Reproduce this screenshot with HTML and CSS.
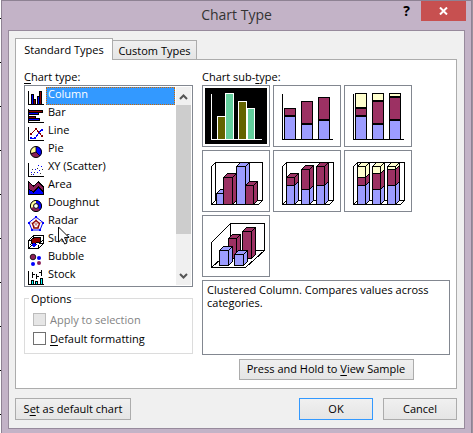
FILE: index.html
```html
<!DOCTYPE html>
<html lang="en">
<head>
<meta charset="utf-8">
<title>Chart Type</title>
<link rel="stylesheet" href="styles.css">
</head>
<body>
<main class="window">
  <header class="titlebar">
    <h1>Chart Type</h1>
    <div class="caption-buttons">
      <button class="help" type="button">?</button>
      <button class="close" type="button" aria-label="Close"><svg width="9" height="8" viewBox="0 0 9 8"><path d="M1 .5l7 7M8 .5l-7 7" stroke="#fff" stroke-width="2"/></svg></button>
    </div>
  </header>
  <div class="client">
    <div class="tabs" role="tablist">
      <button class="tab active" role="tab" aria-selected="true" type="button">Standard Types</button>
      <button class="tab" role="tab" aria-selected="false" type="button">Custom Types</button>
    </div>
    <section class="panel" role="tabpanel">
      <div class="left">
        <div class="label" id="type-label"><u>C</u>hart type:</div>
        <div class="listbox">
          <ul class="types" role="listbox" aria-labelledby="type-label">
            <li role="option" aria-selected="true" class="selected"><svg class="icon" viewBox="0 0 16 16"><g stroke="#000"><path d="M.5 2v13.500H16" fill="none"/><path fill="#00f" d="M3.500 5.500h2v10h-2zM9.500 7.500h2v8h-2z"/><path fill="#8b0000" d="M5.500 10.500h2v5h-2zM11.500 2.500h2v13h-2z"/></g></svg><span>Column</span></li>
            <li role="option"><svg class="icon" viewBox="0 0 16 16"><g stroke="#000"><path fill="#8b0000" d="M.5 3.500h14v2H.5zM.5 9.500h7v2H.5z"/><path fill="#00f" d="M.5 5.500h10v2H.5zM.5 11.500h11v2H.5z"/><path d="M.5 2v13.500H16" fill="none"/></g></svg><span>Bar</span></li>
            <li role="option"><svg class="icon" viewBox="0 0 16 16"><path d="M.5 2v13.500H16" fill="none" stroke="#000"/><path d="M3 9l5-5 6 7" fill="none" stroke="#8b0000"/><path d="M3 13h4l7-9" fill="none" stroke="#00f"/><path fill="#8b0000" d="M2 8h2v2H2zM7 3h2v2H7zM13 10h2v2h-2z"/><path fill="#00f" d="M2 12h2v2H2zM6 12h2v2H6zM13 4h2v2h-2z"/></svg><span>Line</span></li>
            <li role="option"><svg class="icon smooth" viewBox="0 0 16 16"><circle cx="8" cy="9" r="5.500" fill="#8a2058"/><path d="M8 9V3.500A5.500 5.500 0 0 0 2.500 10z" fill="#ffff9c"/><path d="M8 9V3.500A5.500 5.500 0 0 1 12 13z" fill="#00f"/><path d="M8 3.500V9l4 4M8 9l-5 2" stroke="#000" fill="none" stroke-width=".8"/><circle cx="8" cy="9" r="5.500" fill="none" stroke="#000"/></svg><span>Pie</span></li>
            <li role="option"><svg class="icon" viewBox="0 0 16 16"><path d="M.5 2v13.500H16" fill="none" stroke="#000"/><path fill="#00f" d="M3 11h1v1H3zM5 13h1v1H5zM7 8h1v1H7zM9 11h1v1H9zM11 9h1v1h-1zM13 5h1v1h-1zM10 4h1v1h-1z"/><path fill="#333" d="M4 8h1v1H4zM6 11h1v1H6zM9 7h1v1H9zM12 12h1v1h-1zM14 8h1v1h-1zM3 13h1v1H3z"/></svg><span>XY (Scatter)</span></li>
            <li role="option"><svg class="icon" viewBox="0 0 16 16"><path d="M.5 15.500V3l5 4 5-4 5 5v7.500z" fill="#8a2058" stroke="#000"/><path d="M.5 15.500V10l5 3 5-5 5 5v2.500z" fill="#00f" stroke="#000"/></svg><span>Area</span></li>
            <li role="option"><svg class="icon smooth" viewBox="0 0 16 16"><circle cx="8" cy="9" r="4" fill="none" stroke="#8a2058" stroke-width="3"/><path d="M8 5A4 4 0 0 0 4.200 10.500" fill="none" stroke="#ffff9c" stroke-width="3"/><path d="M8 5A4 4 0 0 1 11 11.700" fill="none" stroke="#00f" stroke-width="3"/><circle cx="8" cy="9" r="5.600" fill="none" stroke="#000"/><circle cx="8" cy="9" r="2.400" fill="#fff" stroke="#000"/></svg><span>Doughnut</span></li>
            <li role="option"><svg class="icon smooth" viewBox="0 0 16 16"><g fill="none"><path d="M8 2l7 5.500-3 7.500H4L1 7.500z" stroke="#00f"/><path d="M8 5.500l3.500 3-1.500 4.500H6L4.500 8.500z" stroke="#8b0000" stroke-width="1.300"/><path d="M8 2v7l7-2M8 9l4 6M8 9l-4 6M8 9L1 7.500" stroke="#8b0000" stroke-width=".4"/></g><path fill="#00f" d="M7 1h2v2H7zM0 7h2v2H0zM14 7h2v2h-2zM3 14h2v2H3zM11 14h2v2h-2z"/></svg><span>Radar</span></li>
            <li role="option"><svg class="icon" viewBox="0 0 16 16"><path d="M.5 7.500l5-5h10v8l-5 5H.5z" fill="#fff" stroke="#000"/><path d="M3 11l1-5 3-2 6 1-1 4-4 1z" fill="#8b0000" stroke="#000"/><path d="M2 13l3-3 4 1-2 3z" fill="#00f"/><path d="M.5 7.500h3M5.500 2.500v2M12 10.500h3.500M10.500 15.500v-4M.5 15.500l3-3M10.500 11.500l5-5" fill="none" stroke="#000"/></svg><span>Surface</span></li>
            <li role="option"><svg class="icon smooth" viewBox="0 0 16 16"><circle cx="5" cy="6" r="2.800" fill="#8a2058" stroke="#000" stroke-width=".8"/><circle cx="11" cy="7" r="2" fill="#00f"/><circle cx="5" cy="13" r="2" fill="#00f"/><circle cx="11" cy="12" r="2" fill="#8a2058"/></svg><span>Bubble</span></li>
            <li role="option"><svg class="icon" viewBox="0 0 16 16"><path d="M.5 2v13.500H16" fill="none" stroke="#000"/><path d="M4.500 3v6M8.500 5v5M13.500 1v6M5 5.500h2M9 7.500h2M11 3.500h2" stroke="#000"/><path d="M3.500 11.500h2v4h-2zM7.500 12.500h2v3h-2zM12.500 9.500h2v6h-2z" fill="#0ff" stroke="#000"/></svg><span>Stock</span></li>
          </ul>
          <div class="scrollbar" aria-hidden="true">
            <svg class="arrow" viewBox="0 0 15 18"><path d="M4 12l3.500-3.500L11 12" fill="none" stroke="#555" stroke-width="2"/></svg>
            <div class="thumb"></div>
            <svg class="arrow" viewBox="0 0 15 18"><path d="M4 7l3.500 3.500L11 7" fill="none" stroke="#555" stroke-width="2"/></svg>
          </div>
          <svg class="pointer" viewBox="0 0 12 19"><path d="M.5 1v15l3.500-3.300 2.700 5.300 2.300-1-2.500-5.500H11z" fill="#fff" stroke="#111"/></svg>
        </div>
        <fieldset class="options">
          <legend>Options</legend>
          <label class="check disabled"><input type="checkbox" disabled><span>Apply to selection</span></label>
          <label class="check"><input type="checkbox"><span><u>D</u>efault formatting</span></label>
        </fieldset>
      </div>
      <div class="right">
        <div class="label">Chart sub-<u>t</u>ype:</div>
        <div class="subtypes">
          <button class="cell" type="button" aria-label="Clustered column" aria-pressed="true"><svg viewBox="0 0 68 62"><path d="M3 3h62v56H3z"/><g stroke="#fff"><path d="M9.500 9v45.500H60" fill="none"/><path fill="#636300" d="M15.500 31.500h8v23h-8zM36.500 16.500h8v38h-8z"/><path fill="#63ce9c" d="M23.500 8.500h8v46h-8zM45.500 23.500h7v31h-7z"/></g></svg></button>
          <button class="cell" type="button" aria-label="Stacked column"><svg viewBox="0 0 68 62"><g stroke="#000"><path fill="#9c9cff" d="M11.500 31.500h11v23h-11zM28.500 39.500h11v15h-11zM45.500 35.500h11v19h-11z"/><path fill="#9c3163" d="M11.500 23.500h11v7h-11zM28.500 16.500h11v22h-11zM45.500 12.500h11v22h-11z"/><path d="M9.500 9v45.500H60" fill="none"/></g></svg></button>
          <button class="cell" type="button" aria-label="100% stacked column"><svg viewBox="0 0 68 62"><g stroke="#000"><path fill="#9c9cff" d="M11.500 31.500h11v23h-11zM28.500 39.500h11v15h-11zM45.500 35.500h11v19h-11z"/><path fill="#9c3163" d="M11.500 23.500h11v7h-11zM28.500 16.500h11v22h-11zM45.500 12.500h11v22h-11z"/><path fill="#ffffce" d="M11.500 8.500h11v14h-11zM28.500 8.500h11v7h-11zM45.500 8.500h11v3h-11z"/><path d="M9.500 9v45.500H60" fill="none"/></g></svg></button>
          <button class="cell" type="button" aria-label="3-D clustered column"><svg viewBox="0 0 68 62"><g stroke="#000"><path d="M13.500 50.500v-38h47v38h-47l-4 4h47l4-4M9.500 54.500v-38l4-4" fill="none"/><path fill="#9c9cff" d="M14.500 43.500l4-4h7v11l-4 4h-7zM14.500 43.500h7v11M21.500 43.500l4-4"/><path fill="#9c3163" d="M21.500 27.500l4-4h9v27l-4 4h-9zM21.500 27.500h9v27M30.500 27.500l4-4"/><path fill="#9c9cff" d="M34.500 16.500l4-4h9v38l-4 4h-9zM34.500 16.500h9v38M43.500 16.500l4-4"/><path fill="#9c3163" d="M43.500 35.500l4-4h8v19l-4 4h-8zM43.500 35.500h8v19M51.500 35.500l4-4"/></g></svg></button>
          <button class="cell" type="button" aria-label="3-D stacked column"><svg viewBox="0 0 68 62"><g stroke="#000"><path d="M13.500 50.500v-38h47v38h-47l-4 4h47l4-4M9.500 54.500v-38l4-4" fill="none"/><path fill="#9c9cff" d="M13.500 35.500l4-4h8v19l-4 4h-8zM13.500 35.500h8v19M28.500 39.500l4-4h8v15l-4 4h-8zM28.500 39.500h8v15M43.500 35.500l4-4h8v19l-4 4h-8zM43.500 35.500h8v19"/><path fill="#9c3163" d="M13.500 27.500l4-4h8v8l-4 4h-8zM13.500 27.500h8v8M21.500 27.500l4-4M28.500 19.500l4-4h8v20l-4 4h-8zM28.500 19.500h8v20M36.500 19.500l4-4M43.500 16.500l4-4h8v19l-4 4h-8zM43.500 16.500h8v19M51.500 16.500l4-4"/></g></svg></button>
          <button class="cell" type="button" aria-label="3-D 100% stacked column"><svg viewBox="0 0 68 62"><g stroke="#000"><path d="M13.500 50.500v-38h47v38h-47l-4 4h47l4-4M9.500 54.500v-38l4-4" fill="none"/><path fill="#9c9cff" d="M13.500 35.500l4-4h8v19l-4 4h-8zM13.500 35.500h8v19M28.500 39.500l4-4h8v15l-4 4h-8zM28.500 39.500h8v15M43.500 35.500l4-4h8v19l-4 4h-8zM43.500 35.500h8v19"/><path fill="#9c3163" d="M13.500 27.500l4-4h8v8l-4 4h-8zM13.500 27.500h8v8M28.500 23.500l4-4h8v16l-4 4h-8zM28.500 23.500h8v16M43.500 19.500l4-4h8v16l-4 4h-8zM43.500 19.500h8v16"/><path fill="#ffffce" d="M13.500 16.500l4-4h8v11l-4 4h-8zM13.500 16.500h8v11M21.500 16.500l4-4M28.500 16.500l4-4h8v7l-4 4h-8zM28.500 16.500h8v7M36.500 16.500l4-4M43.500 16.500l4-4h8v3l-4 4h-8zM43.500 16.500h8v3M51.500 16.500l4-4"/></g></svg></button>
          <button class="cell" type="button" aria-label="3-D column"><svg viewBox="0 0 68 62"><g stroke="#000"><path d="M28.500 35.500v-27h34v27h-34l-19 17h34l19-17M9.500 52.500v-25l19-19" fill="none"/><path fill="#9c3163" d="M26.500 23.500l4-4h8v20l-4 4h-8zM26.500 23.500h8v20M34.500 23.500l4-4M40.500 16.500l4-4h9v27l-4 4h-9zM40.500 16.500h9v27M49.500 16.500l4-4"/><path fill="#9c9cff" d="M17.500 35.500l4-4h9v15l-4 4h-9zM17.500 35.500h9v15M26.500 35.500l4-4M32.500 39.500l4-4h9v11l-4 4h-9zM32.500 39.500h9v11M41.500 39.500l4-4"/></g></svg></button>
        </div>
        <div class="description">Clustered Column. Compares values across categories.</div>
        <button class="btn sample" type="button">Press and Hold to <u>V</u>iew Sample</button>
      </div>
    </section>
    <footer class="actions">
      <button class="btn set-default" type="button">S<u>e</u>t as default chart</button>
      <button class="btn ok" type="button">OK</button>
      <button class="btn" type="button">Cancel</button>
    </footer>
  </div>
</main>
</body>
</html>
```
FILE: styles.css
```css
* { box-sizing: border-box; }

body {
  margin: 0;
  padding: 0 1px;
  min-height: 100vh;
  display: flex;
  background: #fff linear-gradient(#000, #000) 0 18px / 1px 1px no-repeat;
  background: linear-gradient(#fff 18px, #000 18px 19px, #fff 19px) 0 0 / 1px 44px repeat-y #9d929f;
  font: 11px/13px "Open Sans", "Noto Sans", sans-serif;
  color: #000;
}

button { font: inherit; color: inherit; padding: 0 0 2px; margin: 0; border-radius: 0; }
svg { display: block; shape-rendering: crispEdges; }
u { text-underline-offset: 2px; text-decoration-thickness: 1px; text-decoration-skip-ink: none; }

.window {
  flex: 1;
  padding: 0 6px 6px;
  background: #c3b3c7;
  border: 1px solid #8e8293;
  border-bottom: 0;
}

.titlebar { position: relative; height: 29px; }
h1 {
  margin: 0;
  font-size: 14px;
  line-height: 28px;
  font-weight: 400;
  text-align: center;
  color: #333;
}
.caption-buttons { position: absolute; top: 0; right: -1px; display: flex; }
.help { width: 29px; height: 20px; border: 0; background: none; font-size: 14px; font-weight: 700; }
.close {
  width: 45px;
  height: 20px;
  padding: 0;
  border: 0;
  background: #c75050;
  display: grid;
  place-items: center;
}
.close svg { shape-rendering: auto; }

.client {
  border: 1px solid #978a9c;
  background: #f0f0f0;
  padding: 7px 7px 8px 6px;
}

.tabs { display: flex; align-items: flex-end; }
.tab {
  height: 19px;
  width: 84px;
  padding: 0;
  border: 1px solid #acacac;
  border-bottom: 0;
  border-left: 0;
  background: linear-gradient(#f0f0f0, #e5e5e5);
}
.tab.active {
  position: relative;
  width: 98px;
  height: 22px;
  margin-bottom: -1px;
  border-left: 1px solid #acacac;
  background: #fff;
}

.panel {
  display: grid;
  grid-template-columns: 169px 1fr;
  gap: 9px;
  padding: 10px 6px 8px 8px;
  border: 1px solid #acacac;
  background: #fff;
}
.label { height: 15px; }

.listbox {
  position: relative;
  display: flex;
  justify-content: space-between;
  border: 1px solid #828790;
  padding: 1px;
}
.types { list-style: none; margin: 0; padding: 0; width: 149px; }
.types li { display: flex; height: 18px; padding-left: 2px; gap: 2px; }
.types span { flex: 1; padding: 0 2px; line-height: 14px; }
.types .selected span { background: #3399ff; color: #fff; outline: 1px dotted #cc6600; outline-offset: -1px; }
.icon { width: 16px; height: 16px; margin-top: 2px; }
.smooth { shape-rendering: auto; }

.scrollbar { width: 15px; display: flex; flex-direction: column; background: #f0f0f0; }
.arrow { width: 15px; height: 18px; shape-rendering: auto; }
.thumb { height: 129px; margin-bottom: auto; background: #cdcdcd; }
.pointer {
  position: absolute;
  left: 33px;
  top: 140px;
  width: 12px;
  height: 19px;
  shape-rendering: auto;
}

.options {
  margin: 5px 0 0;
  padding: 5px 8px 5px;
  min-width: 0;
  border: 1px solid #dcdcdc;
}
.options legend { margin-left: -4px; padding: 0 2px; line-height: 13px; }
.check { display: flex; align-items: center; gap: 4px; height: 19px; }
.check input {
  appearance: none;
  width: 13px;
  height: 13px;
  margin: 0;
  border: 1px solid #707070;
  background: #fff;
}
.check.disabled { color: #838383; }
.check.disabled input { border-color: #bcbcbc; background: #e6e6e6; }

.right { display: flex; flex-direction: column; }
.subtypes { display: flex; flex-wrap: wrap; gap: 3px; }
.cell { width: 68px; height: 62px; padding: 0; border: 0; background: #fff; outline: 1px solid #828790; outline-offset: -1px; }
.cell svg { width: 68px; height: 62px; }
.description {
  height: 75px;
  margin: 3px 0 4px;
  padding: 2px 4px;
  border: 1px solid #828790;
}

.btn {
  height: 22px;
  border: 1px solid #acacac;
  background: linear-gradient(#f0f0f0, #e5e5e5);
}
.sample { width: 175px; height: 21px; align-self: center; }

.actions { display: flex; gap: 10px; margin-top: 9px; }
.actions .btn { width: 74px; }
.actions .set-default { width: 116px; margin-right: auto; }
.actions .ok { border-color: #3399ff; }
```
